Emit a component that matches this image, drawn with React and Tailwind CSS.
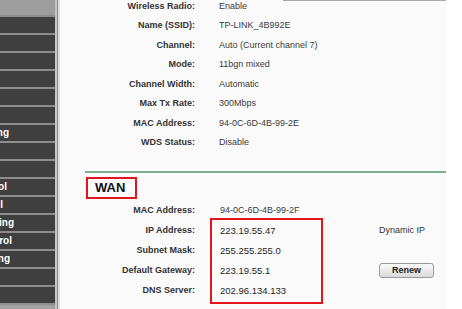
// only the tail ends of these labels show at the left edge of the crop
const menu = [
  { label: '', end: 'w-0' },
  { label: '', end: 'w-0' },
  { label: '', end: 'w-0' },
  { label: '', end: 'w-0' },
  { label: '', end: 'w-0' },
  { label: '', end: 'w-0' },
  { label: 'Forwarding', end: 'w-[9px]' },
  { label: '', end: 'w-0' },
  { label: '', end: 'w-0' },
  { label: 'Parental Control', end: 'w-[7px]' },
  { label: 'Access Control', end: 'w-[3px]' },
  { label: 'Advanced Routing', end: 'w-[14px]' },
  { label: 'Bandwidth Control', end: 'w-[12px]' },
  { label: 'IP & MAC Binding', end: 'w-[10px]' },
  { label: '', end: 'w-0' },
  { label: '', end: 'w-0' },
]

const wireless = [
  ['Wireless Radio:', 'Enable'],
  ['Name (SSID):', 'TP-LINK_4B992E'],
  ['Channel:', 'Auto (Current channel 7)'],
  ['Mode:', '11bgn mixed'],
  ['Channel Width:', 'Automatic'],
  ['Max Tx Rate:', '300Mbps'],
  ['MAC Address:', '94-0C-6D-4B-99-2E'],
  ['WDS Status:', 'Disable'],
]

const wanLabels = ['MAC Address:', 'IP Address:', 'Subnet Mask:', 'Default Gateway:', 'DNS Server:']
const wanValues = ['223.19.55.47', '255.255.255.0', '223.19.55.1', '202.96.134.133']

export default function App() {
  return (
    <div className="w-[462px] h-[309px] overflow-hidden flex bg-white font-['Liberation_Sans',Arial,sans-serif] text-[9px] leading-none">
      {/* left menu, cut off by the crop */}
      <div className="w-[55px] flex flex-col overflow-hidden">
        <div className="h-[15px] bg-[#9d9d9d]" />
        {menu.map((m, i) => (
          <div key={i} className="h-[18px] border-t-2 border-[#8d8d8d] bg-[#3f3f3f] flex items-center">
            <div className={`${m.end} flex justify-end`}>
              <span className="whitespace-nowrap text-white font-bold text-[10px]">{m.label}</span>
            </div>
          </div>
        ))}
        <div className="flex-1 border-t-2 border-[#8d8d8d] bg-[#a3a3a3]" />
      </div>
      <div className="w-[2px] bg-[#c6c6c6]" />
      <div className="w-[1px] bg-[#8c8c8c]" />
      <div className="w-[2px] bg-[#dcdcdc]" />

      <div className="w-[386px] bg-[#fafafa] flex flex-col">
        <div className="h-[1px] ml-[223px] w-[163px] bg-[#a9a9a9]" />
        <div className="-mt-[4.75px]">
          {wireless.map(([k, v]) => (
            <div key={k} className="flex items-center h-[19.5px]">
              <div className="w-[135px] text-right font-bold text-[#333]">{k}</div>
              <div className="ml-[24px] text-[#3a3a3a]">{v}</div>
            </div>
          ))}
        </div>

        <div className="mt-[19px] ml-[25px] h-[2px] bg-[#7fae8e]" />

        <div className="mt-[3.5px] ml-[26px] w-[51px] h-[22px] border-2 border-[#e3141b] flex items-center pl-[7px]">
          <span className="font-bold text-[13px] text-[#111]">WAN</span>
        </div>

        <div className="mt-[2px] flex">
          <div className="w-[135px] flex flex-col">
            {wanLabels.map((l) => (
              <div key={l} className="h-[20px] flex items-center justify-end font-bold text-[#333]">{l}</div>
            ))}
          </div>
          <div className="ml-[15px] w-[113px] flex flex-col">
            <div className="h-[20px] flex items-center pl-[10px] text-[#3a3a3a]">94-0C-6D-4B-99-2F</div>
            <div className="-mt-[3px] border-2 border-[#e3141b] py-[1px] pl-[8px]">
              {wanValues.map((v) => (
                <div key={v} className="h-[20px] flex items-center text-[9.5px] text-[#1e1e1e]">{v}</div>
              ))}
            </div>
          </div>
          <div className="ml-[56px] flex flex-col">
            <div className="h-[20px]" />
            <div className="h-[20px] flex items-center text-[#333]">Dynamic IP</div>
            <div className="h-[20px]" />
            <div className="h-[20px] flex items-center">
              <button className="w-[55px] h-[15px] rounded-[3px] border border-[#9a9a9a] bg-gradient-to-b from-[#fbfbfb] to-[#d9d9d9] font-bold text-[9px] text-[#222] flex items-center justify-center">
                Renew
              </button>
            </div>
          </div>
        </div>
      </div>
      <div className="flex-1 bg-white" />
    </div>
  )
}
